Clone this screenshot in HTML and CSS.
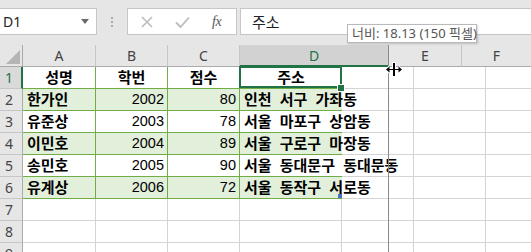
FILE: index.html
```html
<!DOCTYPE html>
<html lang="ko">
<head>
<meta charset="utf-8">
<link rel="stylesheet" href="styles.css">
</head>
<body>
<div class="app">
  <div class="fbar">
    <div class="namebox">
      <span class="nb-text">D1</span>
      <svg class="nb-arrow" width="8" height="5" viewBox="0 0 8 5"><path d="M0 0h8L4 5z" fill="#6a6a6a"/></svg>
    </div>
    <div class="dots"><i></i><i></i><i></i></div>
    <div class="btns">
      <svg class="btn-x" width="12" height="12" viewBox="0 0 12 12"><path d="M1 1L11 11M11 1L1 11" stroke="#bcbcbc" stroke-width="1.6"/></svg>
      <svg class="btn-ok" width="15" height="12" viewBox="0 0 15 12"><path d="M1 6.5L5.5 11L14 1.5" stroke="#bcbcbc" stroke-width="1.8" fill="none"/></svg>
      <span class="btn-fx">fx</span>
    </div>
    <div class="finput">주소</div>
  </div>

  <div class="sheet">
    <div class="hrow">
      <div class="corner"><svg width="14" height="14" viewBox="0 0 14 14"><path d="M14 0V14H0z" fill="#b5b5b5"/></svg></div>
      <div class="ch">A</div>
      <div class="ch">B</div>
      <div class="ch">C</div>
      <div class="ch ch-sel">D</div>
      <div class="ch">E</div>
      <div class="ch ch-last">F</div>
    </div>

    <div class="row">
      <div class="rh rh-sel">1</div>
      <div class="c t th">성명</div>
      <div class="c t th">학번</div>
      <div class="c t th">점수</div>
      <div class="c t th d1">주소</div>
      <div class="c e"></div>
      <div class="c"></div>
      <div class="c g"></div>
    </div>
    <div class="row">
      <div class="rh">2</div>
      <div class="c t k f">한가인</div>
      <div class="c t n f">2002</div>
      <div class="c t n f">80</div>
      <div class="c t k f ov">인천 서구 가좌동</div>
      <div class="c e"></div>
      <div class="c"></div>
      <div class="c g"></div>
    </div>
    <div class="row">
      <div class="rh">3</div>
      <div class="c t k">유준상</div>
      <div class="c t n">2003</div>
      <div class="c t n">78</div>
      <div class="c t k ov">서울 마포구 상암동</div>
      <div class="c e"></div>
      <div class="c"></div>
      <div class="c g"></div>
    </div>
    <div class="row">
      <div class="rh">4</div>
      <div class="c t k f">이민호</div>
      <div class="c t n f">2004</div>
      <div class="c t n f">89</div>
      <div class="c t k f ov">서울 구로구 마장동</div>
      <div class="c e"></div>
      <div class="c"></div>
      <div class="c g"></div>
    </div>
    <div class="row">
      <div class="rh">5</div>
      <div class="c t k">송민호</div>
      <div class="c t n">2005</div>
      <div class="c t n">90</div>
      <div class="c t k ov">서울 동대문구 동대문동</div>
      <div class="c e"></div>
      <div class="c"></div>
      <div class="c g"></div>
    </div>
    <div class="row">
      <div class="rh">6</div>
      <div class="c t k f">유계상</div>
      <div class="c t n f">2006</div>
      <div class="c t n f">72</div>
      <div class="c t k f ov last">서울 동작구 서로동</div>
      <div class="c e"></div>
      <div class="c"></div>
      <div class="c g"></div>
    </div>
    <div class="row">
      <div class="rh">7</div>
      <div class="c"></div><div class="c"></div><div class="c"></div><div class="c"></div><div class="c e"></div><div class="c"></div><div class="c g"></div>
    </div>
    <div class="row">
      <div class="rh">8</div>
      <div class="c"></div><div class="c"></div><div class="c"></div><div class="c"></div><div class="c e"></div><div class="c"></div><div class="c g"></div>
    </div>
    <div class="row">
      <div class="rh">9</div>
      <div class="c"></div><div class="c"></div><div class="c"></div><div class="c"></div><div class="c e"></div><div class="c"></div><div class="c g"></div>
    </div>

    <div class="dragline"></div>
    <svg class="cursor" width="18" height="15" viewBox="0 0 18 15">
      <path d="M7 0h4v15H7z" fill="#fff"/>
      <path d="M0 7.5L4 3.5V6H14V3.5L18 7.5L14 11.5V9H4V11.5z" fill="#fff"/>
      <path d="M8 1h2v13H8z" fill="#000"/>
      <path d="M1 7.5L4.5 4.5V7H13.5V4.5L17 7.5L13.5 10.5V8H4.5V10.5z" fill="#000"/>
    </svg>
  </div>

  <div class="tip">너비: 18.13 (150 픽셀)</div>
</div>
</body>
</html>
```

FILE: styles.css
```css
* { box-sizing: border-box; }
html, body { margin: 0; padding: 0; background: #fff; }
body {
  width: 531px;
  height: 252px;
  overflow: hidden;
  font-family: "Liberation Sans", "Noto Sans CJK KR", sans-serif;
}
.app { position: relative; width: 531px; height: 252px; overflow: hidden; }

/* formula bar */
.fbar {
  height: 45px;
  background: #e6e6e6;
  display: flex;
  align-items: flex-start;
  padding-top: 8px;
}
.namebox {
  width: 97px;
  height: 27px;
  background: #fff;
  border: 1px solid #c6c6c6;
  border-left: none;
  display: flex;
  align-items: center;
  justify-content: space-between;
  padding: 0 7px 0 3px;
}
.nb-text { font-family: "Noto Sans", sans-serif; font-size: 14px; color: #222; }
.dots {
  width: 30px;
  height: 27px;
  display: flex;
  flex-direction: column;
  align-items: center;
  justify-content: center;
  gap: 2px;
}
.dots i { display: block; width: 2px; height: 2px; background: #ababab; }
.btns {
  width: 110px;
  height: 27px;
  background: #fff;
  border: 1px solid #c6c6c6;
  display: flex;
  align-items: center;
  padding-left: 13px;
}
.btn-x { margin-right: 22px; }
.btn-ok { margin-right: 22px; }
.btn-fx {
  font-family: "Liberation Serif", serif;
  font-style: italic;
  font-size: 14px;
  color: #555;
  letter-spacing: -0.5px;
}
.finput {
  flex: 1;
  height: 27px;
  margin-left: 3px;
  background: #fff;
  border: 1px solid #c6c6c6;
  border-right: none;
  padding-left: 11px;
  font-family: "Noto Sans CJK KR", sans-serif;
  font-size: 15px;
  line-height: 25px;
  color: #222;
}

/* sheet */
.sheet { position: relative; }
.hrow {
  display: grid;
  grid-template-columns: 23px 73px 72px 72px 149px 73px 1fr;
  height: 22px;
  background: #e6e6e6;
}
.corner {
  border-right: 1px solid #ababab;
  border-bottom: 1px solid #ababab;
  display: flex;
  align-items: flex-end;
  justify-content: flex-end;
  padding: 0 2px 2px 0;
}
.ch {
  border-right: 1px solid #c6c6c6;
  border-bottom: 1px solid #ababab;
  display: flex;
  align-items: center;
  justify-content: center;
  font-family: "Noto Sans", sans-serif;
  font-size: 14px;
  color: #444;
}
.ch-sel { background: #d2d2d2; color: #217346; border-right-color: #a0a0a0; border-bottom: 2px solid #217346; }
.ch-last { border-right: none; }

.row {
  display: grid;
  grid-template-columns: 23px 73px 72px 72px 102px 72px 72px 1fr;
  height: 22px;
}
.rh {
  background: #e6e6e6;
  border-right: 1px solid #ababab;
  border-bottom: 1px solid #c6c6c6;
  font-family: "Noto Sans", sans-serif;
  font-size: 14px;
  color: #444;
  line-height: 21px;
  padding-left: 5px;
}
.rh-sel { background: #dadada; color: #217346; border-right: 2px solid #217346; }
.c {
  border-right: 1px solid #d4d4d4;
  border-bottom: 1px solid #d4d4d4;
  font-size: 15px;
  line-height: 21px;
  color: #000;
  white-space: nowrap;
}
.c.g { border-right: none; }
.c.t { border-right-color: #70ad47; border-bottom-color: #70ad47; }
.c.f { background: #e2efda; }
.th { text-align: center; font-weight: 700; }
.k { font-weight: 700; padding-left: 4px; }
.n { text-align: right; padding-right: 3px; font-size: 14.5px; }
.ov { overflow: visible; border-right: none !important; position: relative; word-spacing: 4px; }
.d1 { position: relative; border-right: none !important; }
.d1::after {
  content: "";
  position: absolute;
  left: -1px; top: -1px; right: 0; bottom: 0;
  border: 2px solid #217346;
}
.d1::before {
  content: "";
  position: absolute;
  right: -3px; bottom: -4px;
  width: 6px; height: 6px;
  background: #217346;
  border: 1px solid #fff;
  z-index: 2;
}
.last::after {
  content: "";
  position: absolute;
  right: 0; bottom: 0;
  width: 4px; height: 4px;
  background: #4a6fc4;
}

.dragline {
  position: absolute;
  left: 388px;
  top: 0;
  bottom: 0;
  width: 1px;
  background: #8a8a8a;
}
.cursor { position: absolute; left: 385px; top: 17px; }

.tip {
  position: absolute;
  left: 347px;
  top: 24px;
  width: 130px;
  height: 19px;
  background: #fff;
  border: 1px solid #b9b9b9;
  box-shadow: 1px 1px 2px rgba(0,0,0,0.18);
  font-family: "Noto Sans", "Noto Sans CJK KR", sans-serif;
  font-size: 13px;
  line-height: 17px;
  color: #555;
  padding-left: 4px;
  white-space: nowrap;
}
```
